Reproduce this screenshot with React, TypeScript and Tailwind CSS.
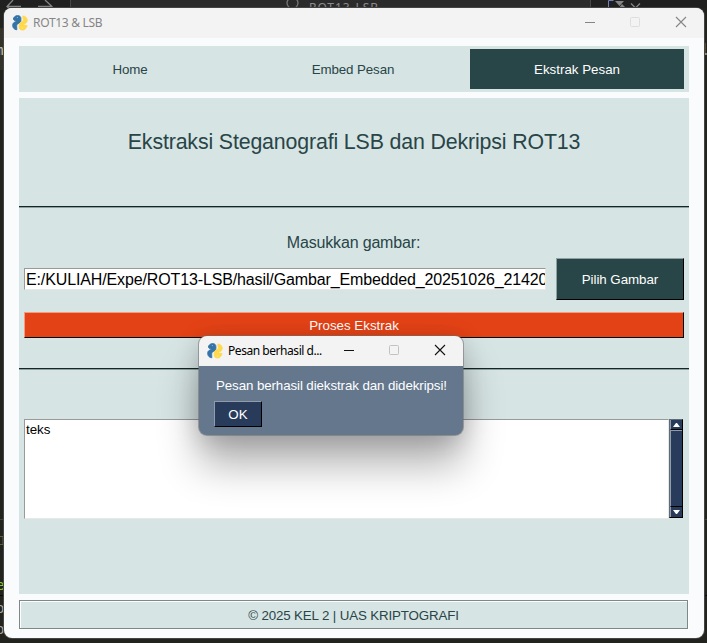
import React from 'react';

const Logo = () => (
  <svg className="h-4 w-4 shrink-0" viewBox="0 0 16 16" fill="none">
    <g strokeWidth=".9" strokeLinejoin="round">
      <path d="M1.300 4C1.800 2 3.400.6 5.600.6c2 0 3.300 1 3.300 2.900v2c0 1.600-.9 2.400-2.300 2.900-1.400.5-2 1.300-1.900 2.800l.1 3.600C2.400 14.600.8 12.900.7 10.700.6 8.900 1.300 7.700 2.900 7.100L5 6.200 2.500 5.600z" fill="#3474a7" stroke="#3474a7" />
      <path d="M10.800 1c2.500.1 4.200 1.700 4.400 3.900 0 2-.8 3.200-2.200 3.700l-2.400 1 2.300.6 2.200.5-.8 1.700c-.8 1.700-2.100 2.700-4 2.600-2-.1-3.100-1.300-3.100-3.100v-1.900c0-1.500.7-2.300 2.200-2.900 1.600-.6 2-1.300 1.900-2.700z" fill="#ffd94b" stroke="#ffd94b" />
    </g>
    <circle cx="5.300" cy="2.600" r=".5" fill="#b8cddd" />
    <circle cx="10.400" cy="13.100" r=".5" fill="#fff4b8" />
  </svg>
);

const Controls = ({ dialog = false }: { dialog?: boolean }) => (
  <svg
    className="h-[30px] w-[119px] shrink-0"
    viewBox="0 0 119 30"
    fill="none"
    stroke={dialog ? '#111' : '#858585'}
  >
    <path d="M0 14.500h10" />
    <rect x="45.500" y="9.500" width="9" height="9" rx="1" stroke={dialog ? '#c2c2c2' : '#dedede'} />
    <path d="M91 9l10 10M101 9L91 19" strokeWidth="1.100" />
  </svg>
);

const Rule = () => <div className="h-0.5 w-full shrink-0 border-b border-[#8aa3a2] bg-[#172524]" />;

const Editor = () => (
  <svg className="absolute inset-0 h-[643px] w-[707px]" viewBox="0 0 707 643" fill="none">
    <rect width="707" height="643" fill="#22221e" />
    <rect width="707" height="8" fill="#202020" />
    <rect x="70" width="521" height="8" fill="#2b2b2b" />
    <path d="M70.500 0v8M590.500 0v8" stroke="#484848" />
    <rect y="28" width="4" height="42" fill="#33332c" />
    <path d="M7 6.500h14M13 0L7 6.500l4 4M38 6.500h14M45 0l7 6.500-4 4" stroke="#858585" strokeWidth="1.300" />
    <circle cx="292.500" cy="3" r="5.500" stroke="#777" strokeWidth="1.300" />
    <text x="309" y="12" fill="#8b8b8b" fontFamily="Noto Sans, sans-serif" fontSize="12" textLength="69">ROT13-LSB</text>
    <path d="M608.500 8V.5h5" stroke="#777fba" />
    <path d="M615 1h9l-4.500 5zM622 4l4 4h-7z" fill="#858585" />
    <path d="M631 3.500l4.500 4.500 4.500-4.500" stroke="#888" strokeWidth="1.200" />
    <g fontFamily="DejaVu Sans Mono, monospace" fontSize="14">
      <text x="-5" y="55" fill="#c8c8bf">m</text>
      <text x="-4" y="590" fill="#8bc926">e</text>
      <text x="-4" y="613" fill="#b3a49a">o</text>
      <text x="-4" y="634" fill="#b3a49a">o</text>
    </g>
    <path d="M0 519.500h4M704 519.500h3" stroke="#424239" />
    <path d="M0 536.500h3v8H0" stroke="#665f3c" />
    <path d="M0 595.500h4M704 595.500h3" stroke="#090909" />
    <path d="M705 43v12" stroke="#896634" />
    <path d="M706 53v2" stroke="#ddd" />
  </svg>
);

const Dialog = () => (
  <section className="absolute left-[199px] top-[336px] flex h-[99px] w-[264px] flex-col rounded-lg bg-[#64778d] shadow-[0_0_0_1px_rgba(110,110,110,.55),0_30px_40px_rgba(0,0,0,.3),0_4px_24px_rgba(0,0,0,.18)]">
    <header className="flex h-[30px] shrink-0 items-center rounded-t-lg bg-[#f3f3f3] pl-2">
      <Logo />
      <span className="ml-[5px] w-[116px] shrink-0 whitespace-nowrap font-['Noto_Sans',sans-serif] text-[12px] tracking-[-.45px] text-black">Pesan berhasil d...</span>
      <Controls dialog />
    </header>
    <div className="flex flex-col items-start pl-[15px] pt-[11px] text-white">
      <p className="h-[18px] whitespace-nowrap pl-[2px] leading-[18px] tracking-[-.1px]">Pesan berhasil diekstrak dan didekripsi!</p>
      <button className="mt-[6px] h-[26px] w-12 border border-b-black border-l-[#929bab] border-r-black border-t-[#929bab] bg-[#283b5b] pt-px text-[13.33px] leading-6">OK</button>
    </div>
  </section>
);

const Scrollbar = () => (
  <div className="flex h-[99px] w-[14px] flex-col border border-l-[#5f6b75] border-t-[#5f6b75] border-b-black border-r-black bg-[#283b5b]">
    <div className="flex h-[10px] items-center justify-center border-b border-l border-b-black border-l-[#929bab]">
      <svg className="h-1 w-[7px]" viewBox="0 0 7 4"><path d="M0 4h7L4 0H3z" fill="white" /></svg>
    </div>
    <div className="flex-1 border-l border-t border-l-[#929bab] border-t-[#929bab]" />
    <div className="flex h-[11px] items-center justify-center border-l border-t border-l-[#929bab] border-t-black">
      <svg className="h-1 w-[7px]" viewBox="0 0 7 4"><path d="M0 0h7L4 4H3z" fill="white" /></svg>
    </div>
  </div>
);

export default function App() {
  return (
    <div className="relative h-[643px] w-[707px] overflow-hidden pl-1 pt-2 font-['Liberation_Sans',Arial,sans-serif] text-[13.33px] text-[#284547]">
      <Editor />
      <main className="relative flex h-[630px] w-[700px] flex-col overflow-hidden rounded-lg bg-[#f9fbfd] shadow-[0_0_0_1px_#444]">
        <header className="flex h-[30px] shrink-0 items-center bg-[#f3f3f3] pl-2">
          <Logo />
          <span className="ml-[5px] w-[552px] whitespace-nowrap font-['Noto_Sans',sans-serif] text-[12px] tracking-[-.3px] text-[#858585]">ROT13 &amp; LSB</span>
          <Controls />
        </header>
        <div className="flex flex-1 flex-col gap-1.5 pb-[9px] pl-[15px] pr-[15px] pt-2">
          <nav className="flex h-[46px] shrink-0 items-center bg-[#d7e4e4] pr-[5px]">
            <button className="w-[222px] pt-px tracking-[-.1px]">Home</button>
            <button className="w-[229px] pr-[5px] pt-px tracking-[-.1px]">Embed Pesan</button>
            <button className="h-10 w-[214px] bg-[#284547] pt-px text-white">Ekstrak Pesan</button>
          </nav>
          <section className="flex h-[496px] shrink-0 flex-col bg-[#d7e4e4]">
            <h1 className="flex h-[108px] shrink-0 items-center justify-center whitespace-nowrap pb-[18px] text-[21.33px] tracking-[-.14px]">Ekstraksi Steganografi LSB dan Dekripsi ROT13</h1>
            <Rule />
            <p className="mt-[25px] h-[20px] shrink-0 pr-px text-center text-[16px] leading-[20px] tracking-[-.17px]">Masukkan gambar:</p>
            <div className="mt-[5px] flex h-[42px] shrink-0 items-center gap-2.5 px-[5px]">
              <div className="h-[22px] w-[522px] shrink-0 overflow-hidden whitespace-nowrap border border-b-[#e8e8e8] border-l-[#999] border-r-[#e8e8e8] border-t-[#999] bg-white pl-[1px] text-[16px] leading-[21px] tracking-[-.13px] text-black">E:/KULIAH/Expe/ROT13-LSB/hasil/Gambar_Embedded_20251026_21420</div>
              <button className="h-[42px] w-[128px] border border-b-black border-l-[#91a0a1] border-r-black border-t-[#91a0a1] bg-[#284547] pt-px tracking-[-.05px] text-white">Pilih Gambar</button>
            </div>
            <button className="mx-[5px] mt-3 h-[26px] shrink-0 border border-b-black border-l-[#f39b83] border-r-black border-t-[#f39b83] bg-[#e34216] pt-px leading-[22px] text-white">Proses Ekstrak</button>
            <div className="mt-[30px]"><Rule /></div>
            <div className="mt-[49px] flex px-[5px]">
              <div className="h-[100px] w-[645px] border border-b-[#e8e8e8] border-l-[#999] border-r-[#e8e8e8] border-t-[#999] bg-white pl-[1px] pt-[1px] leading-[18px] text-black">teks</div>
              <Scrollbar />
            </div>
          </section>
          <footer className="h-[30px] w-[670px] shrink-0 border-b border-r border-white">
            <div className="flex h-[29px] items-center justify-center border border-[#7d8989] bg-[#d7e4e4] pt-[2px] shadow-[inset_1px_1px_white]">
              <span className="tracking-[-.14px]">© 2025 KEL 2 | UAS KRIPTOGRAFI</span>
            </div>
          </footer>
        </div>
      </main>
      <Dialog />
    </div>
  );
}
